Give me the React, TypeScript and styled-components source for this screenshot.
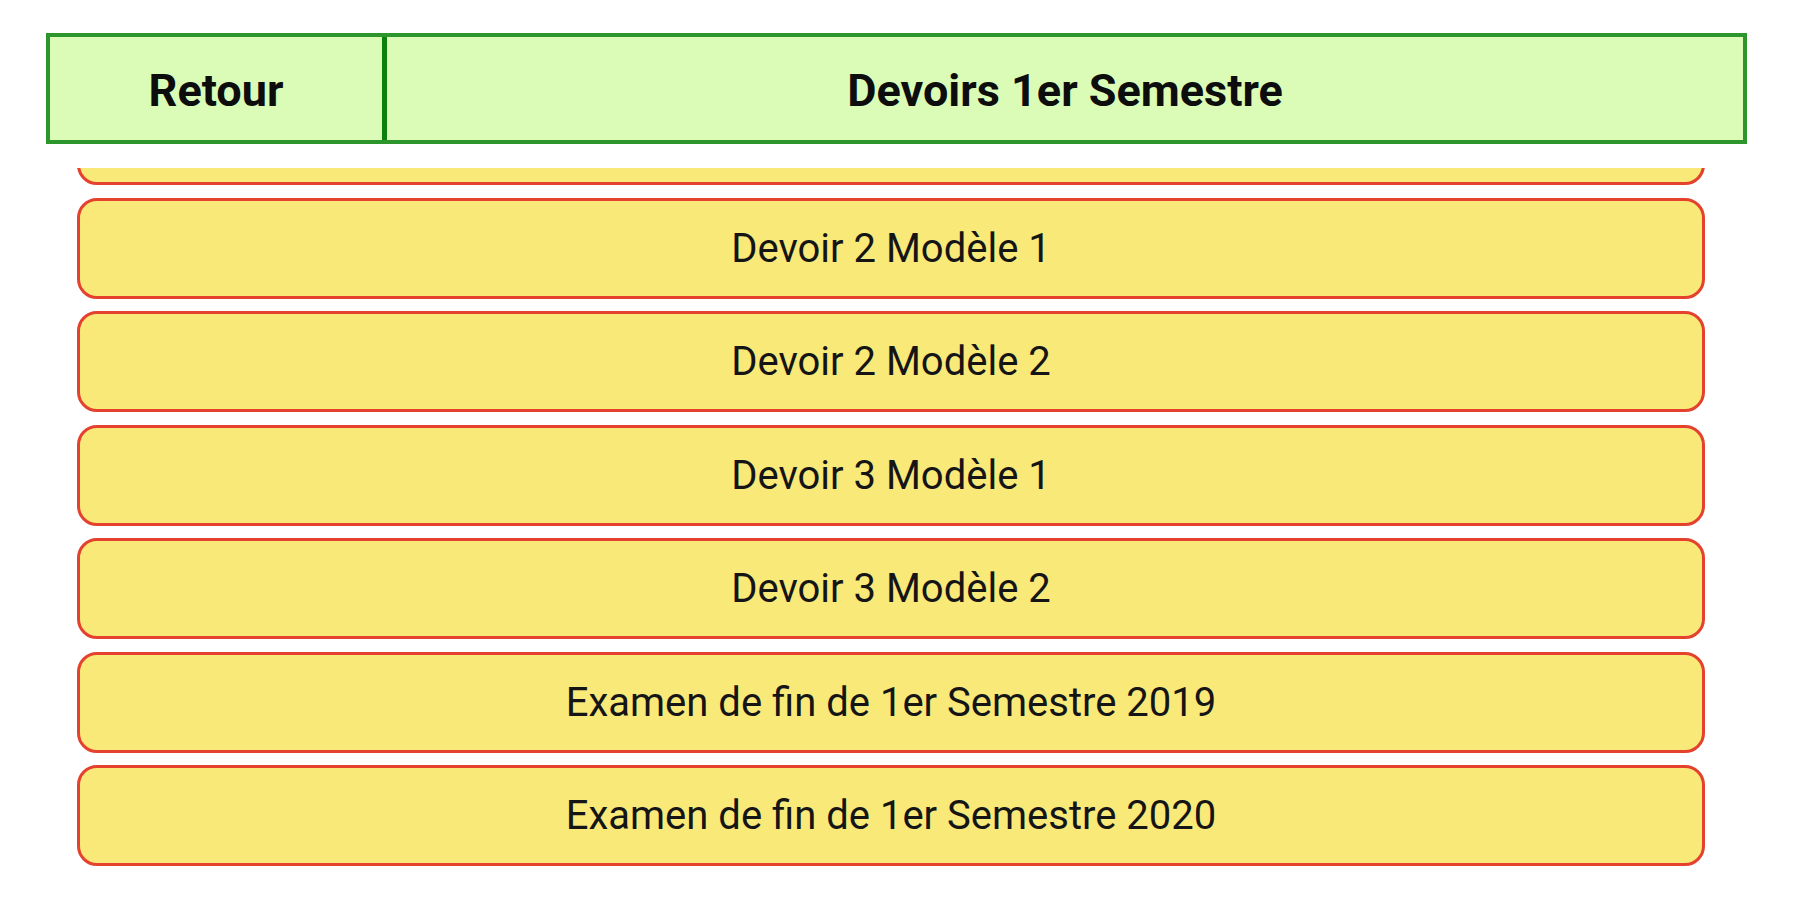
import { useLayoutEffect, useRef } from 'react';
import styled, { createGlobalStyle } from 'styled-components';

const devoirs: string[] = [
  'Devoir 1 Modèle 2',
  'Devoir 2 Modèle 1',
  'Devoir 2 Modèle 2',
  'Devoir 3 Modèle 1',
  'Devoir 3 Modèle 2',
  'Examen de fin de 1er Semestre 2019',
  'Examen de fin de 1er Semestre 2020',
];

function App() {
  const listRef = useRef<HTMLDivElement>(null);

  // la liste est déjà défilée dans la capture
  useLayoutEffect(() => {
    if (listRef.current) listRef.current.scrollTop = 84;
  }, []);

  return (
    <>
      <GlobalStyle />
      <Page>
        <Header>
          <BackCell>Retour</BackCell>
          <TitleCell>Devoirs 1er Semestre</TitleCell>
        </Header>
        <List ref={listRef}>
          {devoirs.map((item) => (
            <DevoirItem key={item}>{item}</DevoirItem>
          ))}
        </List>
      </Page>
    </>
  );
}

export default App;

const GlobalStyle = createGlobalStyle`
  html, body {
    margin: 0;
    padding: 0;
    background: #ffffff;
    font-family: Roboto, "Noto Sans", "Liberation Sans", sans-serif;
  }
  * {
    box-sizing: border-box;
  }
`;

const Page = styled.div`
  width: 1800px;
  height: 900px;
  display: flex;
  flex-direction: column;
  overflow: hidden;
`;

const Header = styled.div`
  display: flex;
  flex-shrink: 0;
  width: 1701px;
  height: 111px;
  margin: 33px 0 0 46px;
  border: 4px solid #2c962d;
  background-color: #dafcb6;
`;

const BackCell = styled.div`
  display: flex;
  align-items: center;
  justify-content: center;
  width: 337px;
  padding-top: 4px;
  border-right: 5px solid #0b800c;
  font-size: 45px;
  font-weight: 700;
  color: #0d0d0d;
  cursor: pointer;
`;

const TitleCell = styled.div`
  flex: 1;
  display: flex;
  align-items: center;
  justify-content: center;
  padding-top: 4px;
  font-size: 45px;
  font-weight: 700;
  color: #0d0d0d;
`;

const List = styled.div`
  flex: 1;
  margin-top: 24px;
  padding: 0 95px 40px 77px;
  display: flex;
  flex-direction: column;
  gap: 12.5px;
  overflow-y: auto;
  scrollbar-width: none;

  &::-webkit-scrollbar {
    display: none;
  }
`;

const DevoirItem = styled.div`
  flex-shrink: 0;
  display: flex;
  align-items: center;
  justify-content: center;
  height: 101px;
  border: 3px solid #e4412f;
  border-radius: 20px;
  background-color: #f9e979;
  font-size: 40px;
  color: #151515;
  cursor: pointer;
`;
